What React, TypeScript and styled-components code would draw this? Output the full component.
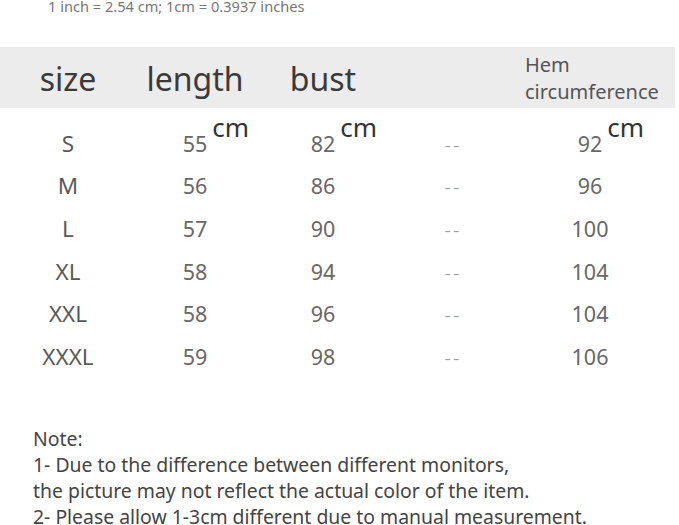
import React from "react";
import styled, { createGlobalStyle } from "styled-components";

const GlobalStyle = createGlobalStyle`
  html, body {
    margin: 0;
    padding: 0;
    background: #ffffff;
  }
  body {
    font-family: "Noto Sans", "Open Sans", sans-serif;
    overflow: hidden;
  }
`;

const rows = [
  { size: "S", length: "55", bust: "82", hem: "92", unit: true },
  { size: "M", length: "56", bust: "86", hem: "96" },
  { size: "L", length: "57", bust: "90", hem: "100" },
  { size: "XL", length: "58", bust: "94", hem: "104" },
  { size: "XXL", length: "58", bust: "96", hem: "104" },
  { size: "XXXL", length: "59", bust: "98", hem: "106" },
];

const columns = "136px 118px 138px 122px 152px";

const App: React.FC = () => {
  return (
    <Page>
      <GlobalStyle />
      <Conversion>1 inch = 2.54 cm; 1cm = 0.3937 inches</Conversion>

      <HeaderBand>
        <HeadCell>size</HeadCell>
        <HeadCell>length</HeadCell>
        <HeadCell>bust</HeadCell>
        <HeadCell />
        <HemHead>
          Hem
          <br />
          circumference
        </HemHead>
      </HeaderBand>

      <Body>
        {rows.map((r) => (
          <Row key={r.size}>
            <SizeCell>{r.size}</SizeCell>
            <Cell>
              <Value>
                {r.length}
                {r.unit && <Unit>cm</Unit>}
              </Value>
            </Cell>
            <Cell>
              <Value>
                {r.bust}
                {r.unit && <Unit>cm</Unit>}
              </Value>
            </Cell>
            <Dash>--</Dash>
            <Cell>
              <Value>
                {r.hem}
                {r.unit && <Unit>cm</Unit>}
              </Value>
            </Cell>
          </Row>
        ))}
      </Body>

      <Notes>
        <p>Note:</p>
        <p>1- Due to the difference between different monitors,</p>
        <p>the picture may not reflect the actual color of the item.</p>
        <p>2- Please allow 1-3cm different due to manual measurement.</p>
      </Notes>
    </Page>
  );
};

export default App;

const Page = styled.div`
  width: 679px;
  height: 525px;
  overflow: hidden;
`;

const Conversion = styled.div`
  margin-top: -3px;
  padding-left: 48px;
  font-size: 14.6px;
  line-height: 18px;
  color: #777;
`;

const HeaderBand = styled.div`
  display: grid;
  grid-template-columns: ${columns};
  align-items: center;
  width: 675px;
  height: 61px;
  margin-top: 32px;
  background: #ececec;
`;

const HeadCell = styled.div`
  text-align: center;
  font-size: 32px;
  color: #3a3a3a;
  padding-top: 1px;
`;

const HemHead = styled.div`
  padding-left: 11px;
  font-size: 20px;
  line-height: 27px;
  color: #555;
`;

const Body = styled.div`
  padding-top: 14px;
`;

const Row = styled.div`
  display: grid;
  grid-template-columns: ${columns};
  align-items: center;
  height: 42.6px;
`;

const Cell = styled.div`
  text-align: center;
  font-size: 21.5px;
  color: #686868;
`;

const SizeCell = styled(Cell)`
  font-size: 22.5px;
  color: #5a5a5a;
`;

const Value = styled.span`
  position: relative;
`;

const Unit = styled.span`
  position: absolute;
  left: calc(100% + 5px);
  top: -20px;
  font-size: 26px;
  color: #333;
`;

const Dash = styled.div`
  text-align: center;
  font-size: 20px;
  font-weight: 300;
  letter-spacing: 2px;
  color: #9a9a9a;
  padding-top: 2px;
`;

const Notes = styled.div`
  padding-left: 33px;
  margin-top: 48px;
  font-size: 19.4px;
  line-height: 26px;
  color: #444;

  p {
    margin: 0;
  }
`;
